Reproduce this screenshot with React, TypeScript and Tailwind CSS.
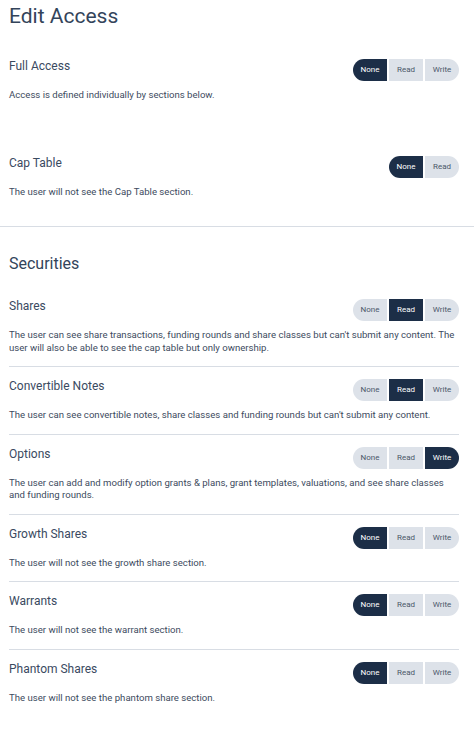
import React from 'react';

type Level = 'None' | 'Read' | 'Write';

type Section = {
  title: string;
  description: string;
  options: Level[];
  value: Level;
};

const topSections: Section[] = [
  {
    title: 'Full Access',
    description: 'Access is defined individually by sections below.',
    options: ['None', 'Read', 'Write'],
    value: 'None',
  },
  {
    title: 'Cap Table',
    description: 'The user will not see the Cap Table section.',
    options: ['None', 'Read'],
    value: 'None',
  },
];

const securities: Section[] = [
  {
    title: 'Shares',
    description:
      "The user can see share transactions, funding rounds and share classes but can't submit any content. The user will also be able to see the cap table but only ownership.",
    options: ['None', 'Read', 'Write'],
    value: 'Read',
  },
  {
    title: 'Convertible Notes',
    description: "The user can see convertible notes, share classes and funding rounds but can't submit any content.",
    options: ['None', 'Read', 'Write'],
    value: 'Read',
  },
  {
    title: 'Options',
    description:
      'The user can add and modify option grants & plans, grant templates, valuations, and see share classes and funding rounds.',
    options: ['None', 'Read', 'Write'],
    value: 'Write',
  },
  {
    title: 'Growth Shares',
    description: 'The user will not see the growth share section.',
    options: ['None', 'Read', 'Write'],
    value: 'None',
  },
  {
    title: 'Warrants',
    description: 'The user will not see the warrant section.',
    options: ['None', 'Read', 'Write'],
    value: 'None',
  },
  {
    title: 'Phantom Shares',
    description: 'The user will not see the phantom share section.',
    options: ['None', 'Read', 'Write'],
    value: 'None',
  },
];

function Toggle({ options, value }: { options: Level[]; value: Level }) {
  return (
    <div className="flex gap-[2px] shrink-0">
      {options.map((opt, i) => (
        <button
          key={opt}
          className={`w-[34px] h-[22px] flex items-center justify-center text-[8px] font-normal leading-none
            ${i === 0 ? 'rounded-l-full' : ''}
            ${i === options.length - 1 ? 'rounded-r-full' : ''}
            ${opt === value ? 'bg-[#1c2e47] text-white' : 'bg-[#dde2e9] text-[#4b586a]'}`}
        >
          {opt}
        </button>
      ))}
    </div>
  );
}

function Row({ section, divider }: { section: Section; divider?: boolean }) {
  return (
    <div className={divider ? 'border-t border-[#d8dde4]' : ''}>
      <div className="pt-[12px] pb-[12px]">
        <div className="flex justify-between items-start h-[22px]">
          <div className="text-[12px] text-[#3a4a5f] leading-[14px]">{section.title}</div>
          <Toggle options={section.options} value={section.value} />
        </div>
        <p className="mt-[8px] text-[9.6px] leading-[12.5px] text-[#3d4b5e]">{section.description}</p>
      </div>
    </div>
  );
}

export default function App() {
  return (
    <div className="min-h-screen bg-white" style={{ fontFamily: 'Roboto, "Noto Sans", sans-serif' }}>
      <div className="px-[9px] pr-[15px]">
        <h1 className="text-[21px] leading-[30px] text-[#33445a] pt-[1px]">Edit Access</h1>

        <div className="mt-[16px]">
          <div className="pb-[30px]">
            <Row section={topSections[0]} />
          </div>
          <Row section={topSections[1]} />
        </div>
      </div>

      <div className="border-t border-[#d8dde4] mt-[16px]" />

      <div className="px-[9px] pr-[15px]">
        <h2 className="text-[16px] leading-[24px] text-[#33445a] mt-[25px] mb-[11px]">Securities</h2>
        {securities.map((s, i) => (
          <Row key={s.title} section={s} divider={i > 0} />
        ))}
      </div>
    </div>
  );
}
